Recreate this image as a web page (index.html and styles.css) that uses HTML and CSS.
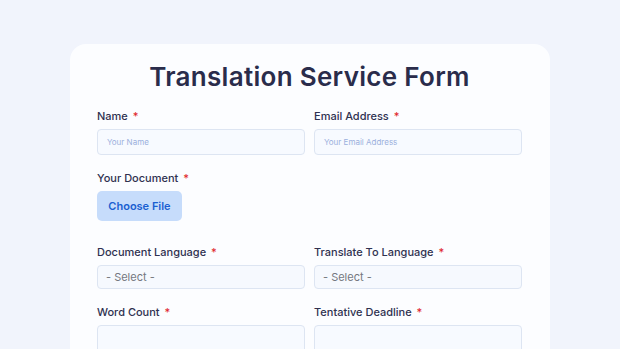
FILE: index.html
```html
<!DOCTYPE html>
<html>
<head>
<meta charset="utf-8">
<link rel="stylesheet" href="styles.css">
</head>
<body>
<div class="page">
  <form class="card">
    <h1 class="title">Translation Service Form</h1>
    <div class="grid">
      <div class="field">
        <label class="label">Name <span class="req">*</span></label>
        <div class="input placeholder">Your Name</div>
      </div>
      <div class="field">
        <label class="label">Email Address <span class="req">*</span></label>
        <div class="input placeholder">Your Email Address</div>
      </div>
      <div class="field field-file">
        <label class="label">Your Document <span class="req">*</span></label>
        <div class="file-btn">Choose File</div>
      </div>
      <div class="field field-empty"></div>
      <div class="field">
        <label class="label">Document Language <span class="req">*</span></label>
        <div class="select">- Select -</div>
      </div>
      <div class="field">
        <label class="label">Translate To Language <span class="req">*</span></label>
        <div class="select">- Select -</div>
      </div>
      <div class="field">
        <label class="label">Word Count <span class="req">*</span></label>
        <div class="input tall"></div>
      </div>
      <div class="field">
        <label class="label">Tentative Deadline <span class="req">*</span></label>
        <div class="input tall"></div>
      </div>
    </div>
  </form>
</div>
</body>
</html>
```
FILE: styles.css
```css
html, body {
  margin: 0;
  padding: 0;
  height: 100%;
  overflow: hidden;
}
body {
  background: #f1f4fc;
  font-family: "Inter", "Lato", sans-serif;
  color: #2b2d4a;
}
.page {
  padding-top: 44px;
  display: flex;
  justify-content: center;
}
.card {
  width: 480px;
  box-sizing: border-box;
  background: #fcfdff;
  border-radius: 16px;
  padding: 15px 28px 40px 27px;
  min-height: 400px;
}
.title {
  margin: 0;
  text-align: center;
  font-size: 26px;
  line-height: 36px;
  font-weight: 600;
  color: #2a2c4b;
  letter-spacing: 0.3px;
}
.grid {
  margin-top: 14px;
  display: grid;
  grid-template-columns: 208px 208px;
  column-gap: 9px;
  row-gap: 16px;
}
.field {
  display: flex;
  flex-direction: column;
  gap: 6px;
}
.field-file {
  margin-bottom: 8px;
}
.label {
  font-size: 11px;
  line-height: 14px;
  font-weight: 500;
  color: #2f3150;
}
.req {
  color: #e0262b;
  margin-left: 2px;
}
.input {
  height: 26px;
  box-sizing: border-box;
  border: 1px solid #dde5f2;
  border-radius: 4px;
  background: #f7faff;
  font-size: 8px;
  line-height: 24px;
  padding-left: 9px;
}
.input.tall {
  height: 40px;
}
.placeholder {
  color: #9bb0dd;
}
.file-btn {
  width: 85px;
  height: 30px;
  box-sizing: border-box;
  background: #c6dcfb;
  border-radius: 5px;
  color: #1b5fd1;
  font-size: 11px;
  font-weight: 600;
  display: flex;
  align-items: center;
  justify-content: center;
}
.select {
  height: 24px;
  box-sizing: border-box;
  border: 1px solid #dde5f2;
  border-radius: 4px;
  background: #f6f9fe;
  font-size: 11px;
  line-height: 22px;
  padding-left: 8px;
  color: #74777f;
}
```
